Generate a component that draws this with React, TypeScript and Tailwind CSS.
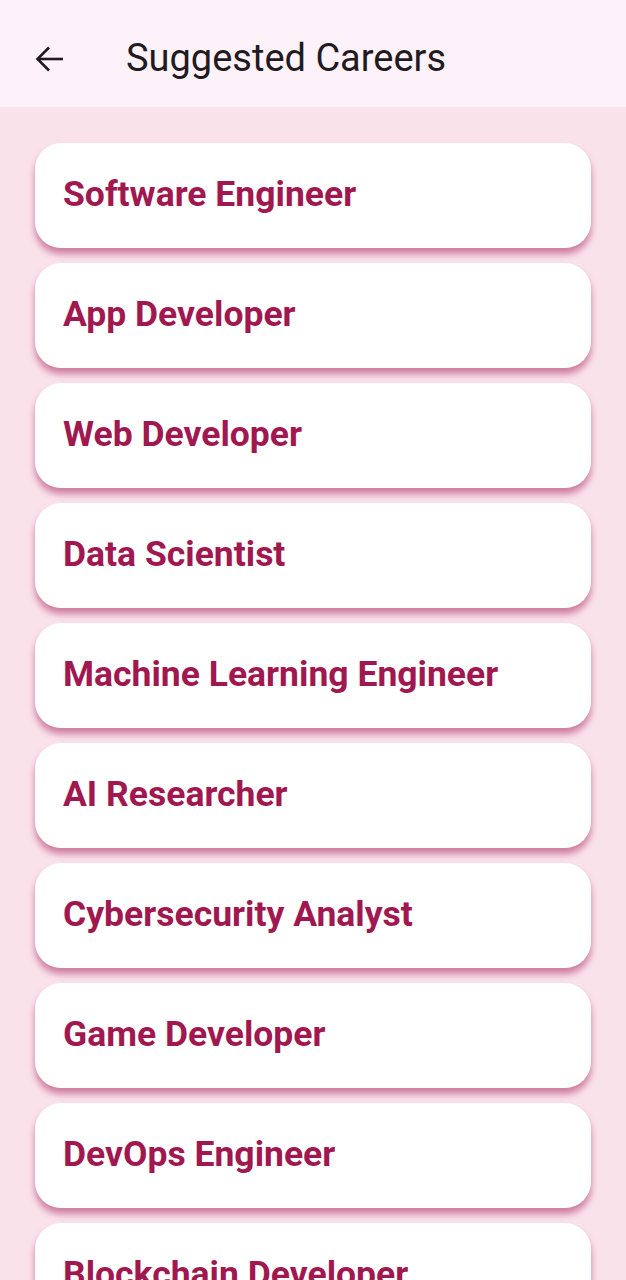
import React from "react";

const careers = [
  "Software Engineer",
  "App Developer",
  "Web Developer",
  "Data Scientist",
  "Machine Learning Engineer",
  "AI Researcher",
  "Cybersecurity Analyst",
  "Game Developer",
  "DevOps Engineer",
  "Blockchain Developer",
];

export default function App() {
  return (
    <div className="w-[626px] h-[1280px] overflow-hidden bg-[#fae2eb]" style={{ fontFamily: "Roboto, sans-serif" }}>
      <header className="h-[107px] bg-[#fdf1fa] flex items-center pt-[10px]">
        <div className="w-[126px] flex items-center pl-[35px]">
          <svg width="28" height="26" viewBox="0 0 28 26" fill="none" stroke="#1f1b20" strokeWidth="2.6">
            <path d="M2.5 13H28" />
            <path d="M14 1.5L2.5 13L14 24.5" />
          </svg>
        </div>
        <h1 className="text-[38px] text-[#1f1b20] font-normal leading-none -mt-[2px]">Suggested Careers</h1>
      </header>
      <main className="flex flex-col gap-[15px] px-[35px] pt-[36px]">
        {careers.map((c) => (
          <div
            key={c}
            className="h-[105px] shrink-0 bg-white rounded-[26px] flex items-center pl-[28px] shadow-[0_6px_7px_rgba(170,40,95,0.55)]"
          >
            <span className="text-[35.5px] font-bold text-[#a0184f] leading-none -mt-[1px]">{c}</span>
          </div>
        ))}
      </main>
    </div>
  );
}
